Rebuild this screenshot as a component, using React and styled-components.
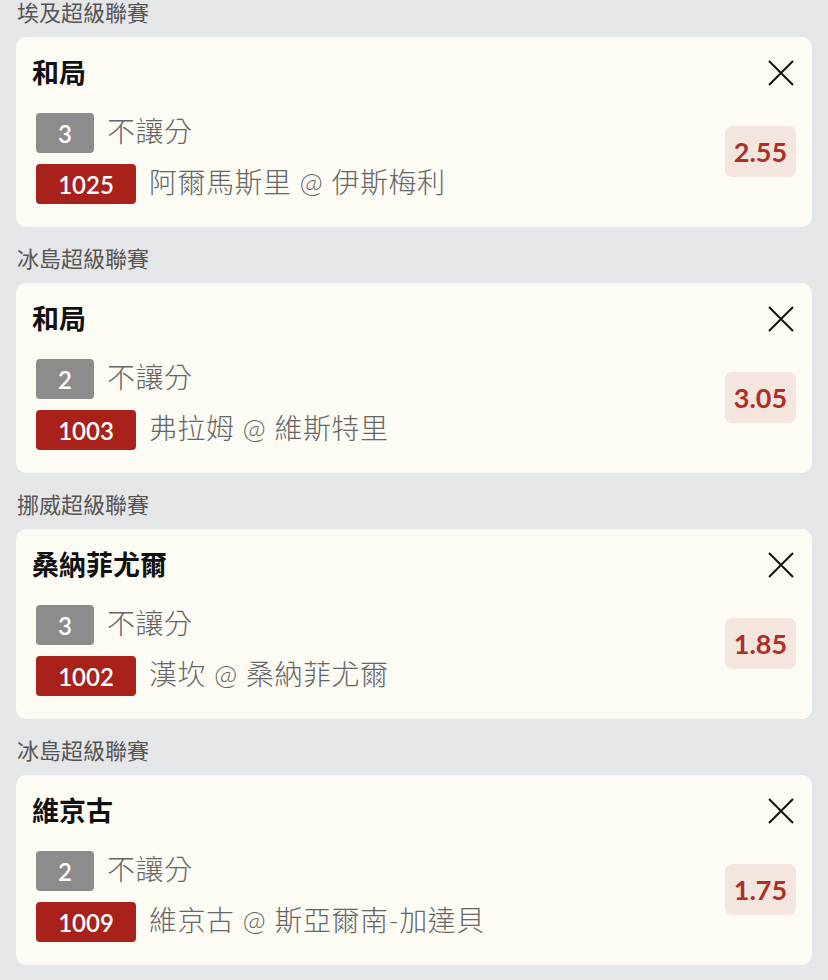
import React from "react";
import styled, { createGlobalStyle } from "styled-components";

const bets = [
  { league: "埃及超級聯賽", pick: "和局", leg: "3", type: "不讓分", code: "1025", match: "阿爾馬斯里 @ 伊斯梅利", odds: "2.55" },
  { league: "冰島超級聯賽", pick: "和局", leg: "2", type: "不讓分", code: "1003", match: "弗拉姆 @ 維斯特里", odds: "3.05" },
  { league: "挪威超級聯賽", pick: "桑納菲尤爾", leg: "3", type: "不讓分", code: "1002", match: "漢坎 @ 桑納菲尤爾", odds: "1.85" },
  { league: "冰島超級聯賽", pick: "維京古", leg: "2", type: "不讓分", code: "1009", match: "維京古 @ 斯亞爾南-加達貝", odds: "1.75" },
];

function BetSlip() {
  return (
    <Page>
      <GlobalStyle />
      {bets.map((bet, index) => (
        <Group key={index}>
          <League>{bet.league}</League>
          <Card>
            <Header>
              <Pick>{bet.pick}</Pick>
              <CloseButton aria-label="remove">
                <svg width="26" height="26" viewBox="0 0 26 26">
                  <path d="M1 1L25 25M25 1L1 25" stroke="#111" strokeWidth="2" fill="none" />
                </svg>
              </CloseButton>
            </Header>
            <Body>
              <Rows>
                <Row>
                  <Badge $tone="gray">{bet.leg}</Badge>
                  <RowText>{bet.type}</RowText>
                </Row>
                <Row>
                  <Badge $tone="red">{bet.code}</Badge>
                  <RowText>{bet.match}</RowText>
                </Row>
              </Rows>
              <Odds>{bet.odds}</Odds>
            </Body>
          </Card>
        </Group>
      ))}
    </Page>
  );
}

export default BetSlip;

const GlobalStyle = createGlobalStyle`
  body {
    margin: 0;
    background: #e5e6e8;
    font-family: Lato, "Noto Sans CJK TC", sans-serif;
  }
`;

const Page = styled.div`
  padding: 0 16px;
  margin-top: -1px;
`;

const Group = styled.section`
  & + & {
    margin-top: 18px;
  }
`;

const League = styled.div`
  height: 28px;
  line-height: 28px;
  margin-bottom: 10px;
  padding-left: 1px;
  font-size: 22px;
  color: #555;
`;

const Card = styled.div`
  background: #fdfcf4;
  border-radius: 10px;
  padding: 18px 16px 23px 16px;
  height: 190px;
  box-sizing: border-box;
`;

const Header = styled.div`
  display: flex;
  align-items: center;
  justify-content: space-between;
  height: 36px;
`;

const Pick = styled.div`
  font-size: 27px;
  line-height: 32px;
  margin-bottom: 1px;
  font-weight: 700;
  color: #111;
`;

const CloseButton = styled.button`
  display: flex;
  align-items: center;
  justify-content: center;
  width: 36px;
  height: 36px;
  margin-right: -3px;
  padding: 0;
  border: none;
  background: none;
`;

const Body = styled.div`
  display: flex;
  justify-content: space-between;
  align-items: flex-start;
  margin-top: 22px;
`;

const Rows = styled.div`
  display: flex;
  flex-direction: column;
  gap: 11px;
  padding-left: 4px;
`;

const Row = styled.div`
  display: flex;
  align-items: center;
  gap: 13px;
`;

const Badge = styled.span`
  display: inline-flex;
  align-items: center;
  justify-content: center;
  height: 40px;
  width: ${(p) => (p.$tone === "red" ? "100px" : "58px")};
  border-radius: 4px;
  background: ${(p) => (p.$tone === "red" ? "#a8221b" : "#8c8c8c")};
  color: #fff;
  font-size: 24px;
  font-weight: 600;
`;

const RowText = styled.span`
  font-size: 28px;
  line-height: 32px;
  letter-spacing: 0.5px;
  margin-bottom: 5px;
  font-weight: 300;
  color: #666;
`;

const Odds = styled.div`
  margin-top: 13px;
  width: 71px;
  height: 51px;
  display: flex;
  align-items: center;
  justify-content: center;
  border-radius: 7px;
  background: #f4e5df;
  color: #ae2f27;
  font-size: 27px;
  font-weight: 700;
`;
